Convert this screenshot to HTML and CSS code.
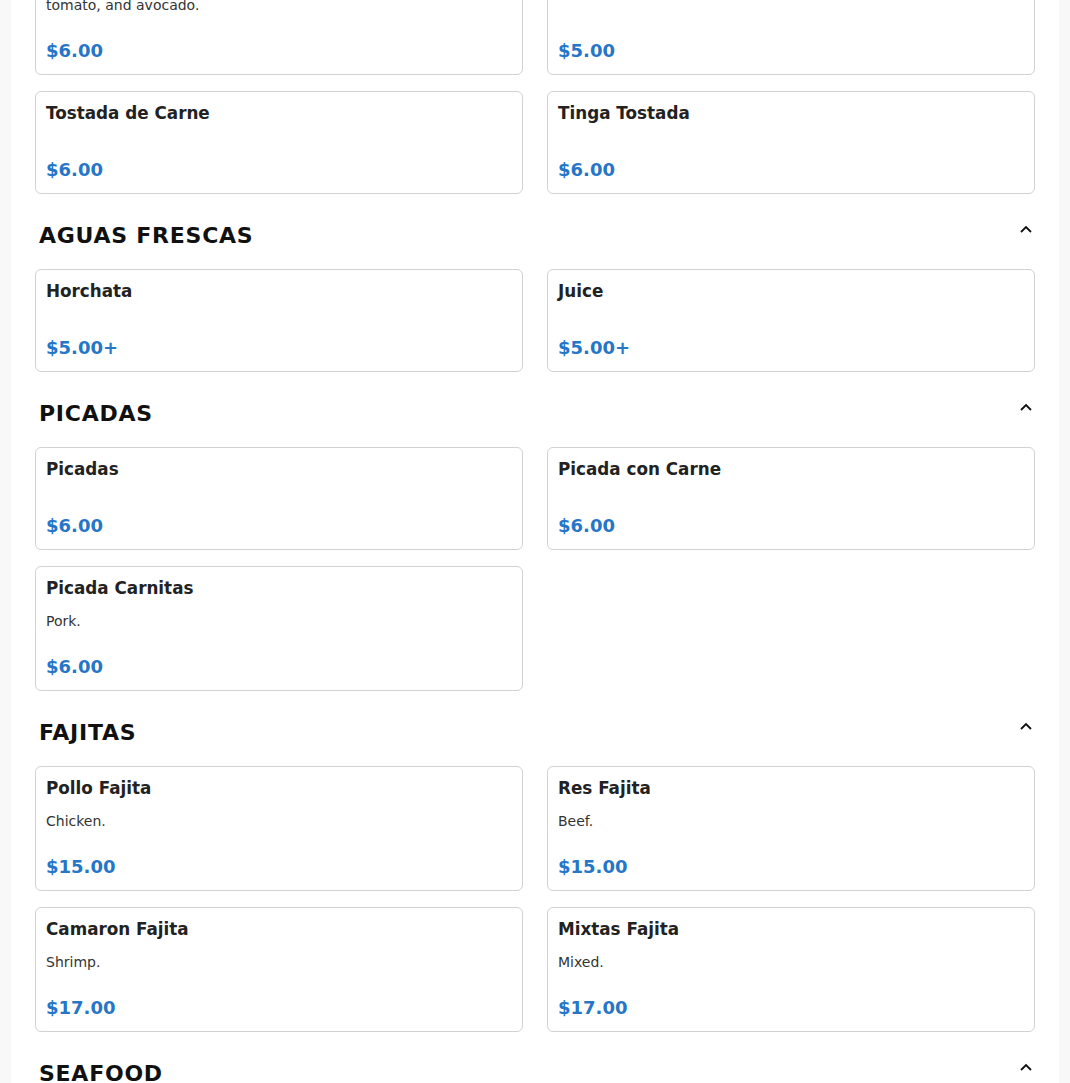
FILE: index.html
```html
<!DOCTYPE html>
<html lang="en">
<head>
<meta charset="utf-8">
<title>Menu</title>
<link rel="stylesheet" href="styles.css">
</head>
<body>
<main class="menu">
  <section class="section section-cut">
    <div class="grid">
      <div class="card">
        <div class="item-name">Tostada de Pollo</div>
        <div class="item-desc">Crispy tostada with chicken, beans, lettuce, cheese, sour cream,<br>tomato, and avocado.</div>
        <div class="item-price">$6.00</div>
      </div>
      <div class="card">
        <div class="item-name">Tostada Sencilla</div>
        <div class="item-desc">Beans, lettuce and cheese.</div>
        <div class="item-price">$5.00</div>
      </div>
      <div class="card">
        <div class="item-name">Tostada de Carne</div>
        <div class="item-desc"></div>
        <div class="item-price">$6.00</div>
      </div>
      <div class="card">
        <div class="item-name">Tinga Tostada</div>
        <div class="item-desc"></div>
        <div class="item-price">$6.00</div>
      </div>
    </div>
  </section>

  <section class="section">
    <div class="section-head">
      <h2 class="section-title">AGUAS FRESCAS</h2>
      <svg class="chevron" viewBox="0 0 12 8" width="12" height="8"><path d="M1 7 L6 2 L11 7" fill="none" stroke="#111" stroke-width="1.8"/></svg>
    </div>
    <div class="grid">
      <div class="card">
        <div class="item-name">Horchata</div>
        <div class="item-desc"></div>
        <div class="item-price">$5.00+</div>
      </div>
      <div class="card">
        <div class="item-name">Juice</div>
        <div class="item-desc"></div>
        <div class="item-price">$5.00+</div>
      </div>
    </div>
  </section>

  <section class="section">
    <div class="section-head">
      <h2 class="section-title">PICADAS</h2>
      <svg class="chevron" viewBox="0 0 12 8" width="12" height="8"><path d="M1 7 L6 2 L11 7" fill="none" stroke="#111" stroke-width="1.8"/></svg>
    </div>
    <div class="grid">
      <div class="card">
        <div class="item-name">Picadas</div>
        <div class="item-desc"></div>
        <div class="item-price">$6.00</div>
      </div>
      <div class="card">
        <div class="item-name">Picada con Carne</div>
        <div class="item-desc"></div>
        <div class="item-price">$6.00</div>
      </div>
      <div class="card">
        <div class="item-name">Picada Carnitas</div>
        <div class="item-desc">Pork.</div>
        <div class="item-price">$6.00</div>
      </div>
    </div>
  </section>

  <section class="section">
    <div class="section-head">
      <h2 class="section-title">FAJITAS</h2>
      <svg class="chevron" viewBox="0 0 12 8" width="12" height="8"><path d="M1 7 L6 2 L11 7" fill="none" stroke="#111" stroke-width="1.8"/></svg>
    </div>
    <div class="grid">
      <div class="card">
        <div class="item-name">Pollo Fajita</div>
        <div class="item-desc">Chicken.</div>
        <div class="item-price">$15.00</div>
      </div>
      <div class="card">
        <div class="item-name">Res Fajita</div>
        <div class="item-desc">Beef.</div>
        <div class="item-price">$15.00</div>
      </div>
      <div class="card">
        <div class="item-name">Camaron Fajita</div>
        <div class="item-desc">Shrimp.</div>
        <div class="item-price">$17.00</div>
      </div>
      <div class="card">
        <div class="item-name">Mixtas Fajita</div>
        <div class="item-desc">Mixed.</div>
        <div class="item-price">$17.00</div>
      </div>
    </div>
  </section>

  <section class="section">
    <div class="section-head">
      <h2 class="section-title">SEAFOOD</h2>
      <svg class="chevron" viewBox="0 0 12 8" width="12" height="8"><path d="M1 7 L6 2 L11 7" fill="none" stroke="#111" stroke-width="1.8"/></svg>
    </div>
    <div class="grid">
      <div class="card">
        <div class="item-name">Ceviche de Camaron</div>
        <div class="item-desc">Shrimp.</div>
        <div class="item-price">$16.00</div>
      </div>
      <div class="card">
        <div class="item-name">Coctel de Camaron</div>
        <div class="item-desc">Shrimp cocktail.</div>
        <div class="item-price">$17.00</div>
      </div>
    </div>
  </section>
</main>
</body>
</html>
```

FILE: styles.css
```css
html, body {
  margin: 0;
  padding: 0;
}

body {
  background: #f8f8f8;
  font-family: "DejaVu Sans", "Liberation Sans", sans-serif;
  color: #1f1f1f;
  overflow: hidden;
}

.menu {
  width: 1048px;
  margin: 0 auto;
  background: #ffffff;
  padding: 0 24px 40px;
  box-sizing: border-box;
}

.section-cut {
  margin-top: -70px;
}

.section-head {
  display: flex;
  justify-content: space-between;
  align-items: flex-start;
  padding: 28px 3px 0 4px;
  height: 47px;
  box-sizing: content-box;
}

.section-title {
  margin: 0;
  font-size: 22px;
  line-height: 28px;
  font-weight: 700;
  letter-spacing: 0.75px;
  color: #111;
}

.chevron {
  margin-top: 3px;
  display: block;
}

.grid {
  display: grid;
  grid-template-columns: 1fr 1fr;
  column-gap: 24px;
  row-gap: 16px;
}

.card {
  display: flex;
  flex-direction: column;
  border: 1px solid #d2d2d2;
  border-radius: 6px;
  padding: 10px 10px 11px;
  background: #fff;
}

.item-name {
  font-size: 16.8px;
  line-height: 22px;
  font-weight: 700;
  color: #222;
}

.item-desc {
  margin-top: 12px;
  font-size: 14px;
  line-height: 20px;
  color: #333;
}

.item-desc:empty {
  margin-top: 10px;
}

.item-price {
  margin-top: auto;
  padding-top: 24px;
  font-size: 18px;
  line-height: 24px;
  font-weight: 700;
  color: #2676c8;
}
```
